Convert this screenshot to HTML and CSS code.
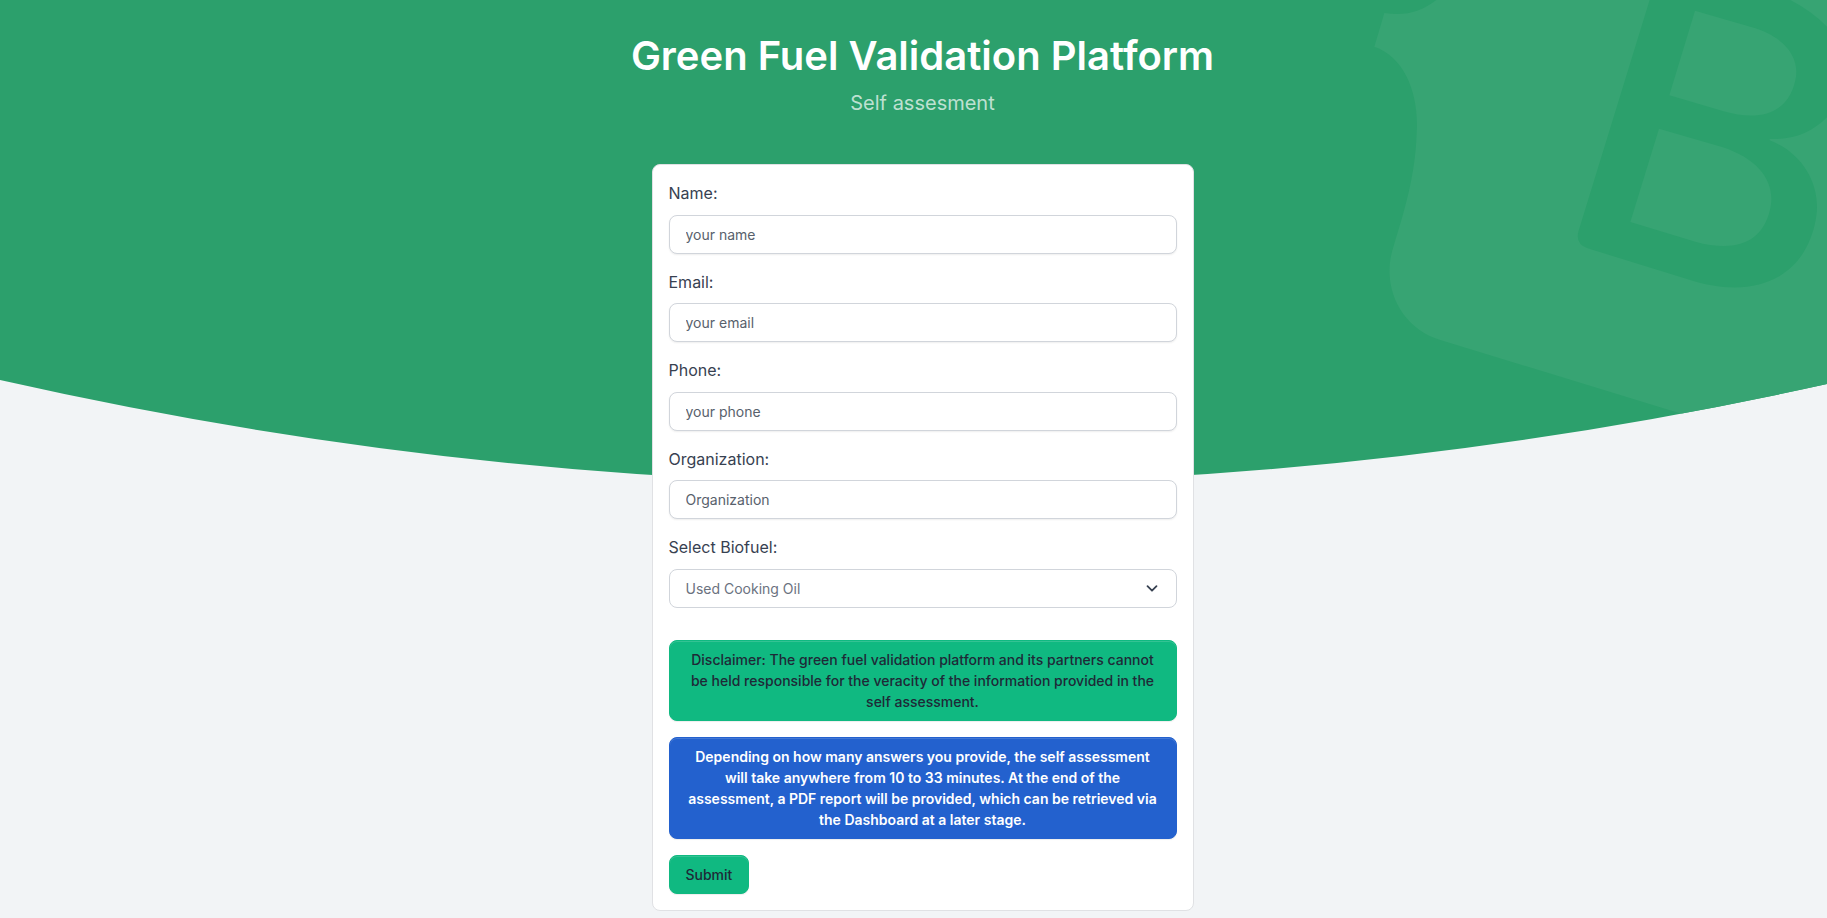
FILE: index.html
```html
<!DOCTYPE html>
<html lang="en">
<head>
<meta charset="utf-8">
<meta name="viewport" content="width=device-width, initial-scale=1">
<title>Green Fuel Validation Platform</title>
<link rel="stylesheet" href="styles.css">
</head>
<body>
<div class="page">
  <svg class="backdrop" viewBox="0 0 1845 484" preserveAspectRatio="none" aria-hidden="true">
    <defs><clipPath id="dome"><path d="M0 0H1845V380Q922 588 0 380Z"/></clipPath></defs>
    <path class="backdrop-base" d="M0 0H1845V380Q922 588 0 380Z"/>
    <g clip-path="url(#dome)">
      <path class="backdrop-mark" fill-rule="evenodd" transform="translate(1347 0) scale(.33333)" d="M280 -10C232 32 180 50 112 39L82 140C175 172 217 285 209 400C205 530 170 640 140 738C99 860 163 985 280 1020L1600 1424V-10Z
      M911 -10L694 695Q685 732 722 745L1020 837C1220 904 1376 836 1407 655C1424 560 1370 460 1268 421L1268 417C1340 420 1395 397 1440 352C1510 275 1500 145 1440 80Q1390 28 1310 -10Z
      M1044 32L1215 82C1320 112 1362 180 1344 245C1322 338 1240 366 1130 334L967 286Z
      M936 386L1125 441C1240 478 1286 550 1270 625C1247 733 1160 757 1045 725L850 666Z"/>
    </g>
  </svg>
  <main class="content">
    <header class="intro">
      <h1 class="title">Green Fuel Validation Platform</h1>
      <p class="subtitle">Self assesment</p>
    </header>
    <form class="card">
      <div class="field">
        <label class="label" for="name">Name:</label>
        <input class="control" id="name" type="text" placeholder="your name">
      </div>
      <div class="field">
        <label class="label" for="email">Email:</label>
        <input class="control" id="email" type="email" placeholder="your email">
      </div>
      <div class="field">
        <label class="label" for="phone">Phone:</label>
        <input class="control" id="phone" type="tel" placeholder="your phone">
      </div>
      <div class="field">
        <label class="label" for="organization">Organization:</label>
        <input class="control" id="organization" type="text" placeholder="Organization">
      </div>
      <div class="field field-last">
        <label class="label" for="biofuel">Select Biofuel:</label>
        <div class="select-wrap">
          <select class="control select" id="biofuel"><option>Used Cooking Oil</option></select>
          <svg class="chevron" viewBox="0 0 20 20" aria-hidden="true"><path d="M5 8l5 5 5-5"/></svg>
        </div>
      </div>
      <p class="notice notice-green">Disclaimer: The green fuel validation platform and its partners cannot be held responsible for the veracity of the information provided in the self assessment.</p>
      <p class="notice notice-blue">Depending on how many answers you provide, the self assessment will take anywhere from 10 to 33 minutes. At the end of the assessment, a PDF report will be provided, which can be retrieved via the Dashboard at a later stage.</p>
      <button class="submit" type="submit">Submit</button>
    </form>
  </main>
</div>
</body>
</html>
```
FILE: styles.css
```css
* {
  box-sizing: border-box;
}

body {
  margin: 0;
  overflow-x: hidden;
  background: #f2f4f6;
  color: #374151;
  font-family: Inter, "Open Sans", sans-serif;
  font-size: 16px;
  line-height: 1.6;
}

.page {
  position: relative;
  width: calc(100% + 18px);
}

.backdrop {
  position: absolute;
  top: 0;
  left: 0;
  width: 100%;
  height: 484px;
}

.backdrop-base {
  fill: #2ca06c;
}

.backdrop-mark {
  fill: #37a473;
}

.content {
  position: relative;
  display: flex;
  flex-direction: column;
  align-items: center;
  padding: 32px 16px 8px;
}

.intro {
  margin-bottom: 46px;
  text-align: center;
}

.title {
  margin: 0 0 8px;
  color: #fff;
  font-size: 40px;
  font-weight: 600;
  line-height: 48px;
}

.subtitle {
  margin: 0;
  color: rgba(255, 255, 255, 0.7);
  font-size: 20px;
  line-height: 30px;
}

.card {
  width: 100%;
  max-width: 542px;
  padding: 16px;
  background: #fff;
  border: 1px solid #e0e1e4;
  border-radius: 8px;
}

.field {
  display: grid;
  gap: 8px;
  margin-bottom: 16px;
}

.field-last {
  margin-bottom: 32px;
}

.control {
  width: 100%;
  height: 39px;
  padding: 8px 16px;
  background: #fff;
  border: 1px solid #d1d5db;
  border-radius: 8px;
  box-shadow: 0 1px 2px rgba(0, 0, 0, 0.07);
  color: #6b7280;
  font-family: inherit;
  font-size: 14px;
  line-height: 21px;
}

.control::placeholder {
  color: #58616c;
  opacity: 1;
}

.select-wrap {
  position: relative;
  display: flex;
}

.select {
  appearance: none;
  box-shadow: none;
}

.chevron {
  position: absolute;
  top: 10px;
  right: 16px;
  width: 18px;
  height: 18px;
  fill: none;
  stroke: #374151;
  stroke-width: 2;
  stroke-linecap: round;
  stroke-linejoin: round;
  pointer-events: none;
}

.notice,
.submit {
  padding: 8px 16px;
  border: 1px solid;
  border-radius: 8px;
  box-shadow: inset 0 1px 0 rgba(255, 255, 255, 0.15), 0 1px 1px rgba(0, 0, 0, 0.07);
  font-family: inherit;
  font-size: 14px;
  font-weight: 500;
  line-height: 21px;
  text-align: center;
}

.notice {
  margin: 0 0 16px;
}

.notice-green,
.submit {
  background: #10b981;
  border-color: #10b981;
  color: #1f2937;
}

.notice-blue {
  background: #2361ce;
  border-color: #2361ce;
  color: #fff;
  font-weight: 600;
}

.submit {
  display: block;
  cursor: pointer;
}
```
